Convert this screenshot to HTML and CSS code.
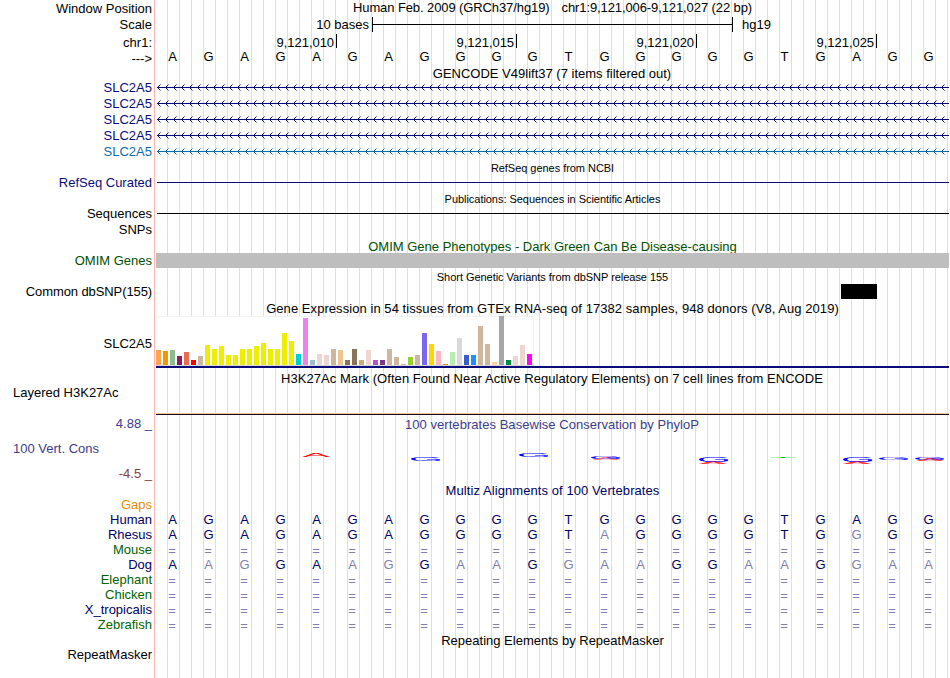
FILE: index.html
```html
<!DOCTYPE html>
<html lang="en">
<head>
  <meta charset="UTF-8">
  <meta name="viewport" content="width=device-width, initial-scale=1.0">
  <title>Human chr1:9,121,006-9,121,027</title>
  <link rel="stylesheet" href="styles.css">
</head>
<body>
  <div class="browser">
    <!-- Ruler -->
    <div class="row position">
      <div class="label">Window Position</div>
      <div class="title"><span class="assembly">Human Feb. 2009 (GRCh37/hg19)</span><span>chr1:9,121,006-9,121,027 (22 bp)</span></div>
    </div>
    <div class="row scale">
      <div class="label">Scale</div>
      <div class="scale-bar">
        <span class="bases-text">10 bases</span>
        <div class="bar"></div>
        <span>hg19</span>
      </div>
    </div>
    <div class="row chrom">
      <div class="label">chr1:</div>
      <div class="ticks">
        <span>9,121,010</span><span>9,121,015</span><span>9,121,020</span><span>9,121,025</span>
      </div>
    </div>
    <div class="row sequence">
      <div class="label">---&gt;</div>
      <div class="bases" data-seq="AGAGAGAGGGGTGGGGGTGAGG"></div>
    </div>

    <!-- Genes -->
    <div class="row gencode-title"><div class="title">GENCODE V49lift37 (7 items filtered out)</div></div>
    <div class="row gene"><div class="label">SLC2A5</div><div class="intron"></div></div>
    <div class="row gene"><div class="label">SLC2A5</div><div class="intron"></div></div>
    <div class="row gene"><div class="label">SLC2A5</div><div class="intron"></div></div>
    <div class="row gene"><div class="label">SLC2A5</div><div class="intron"></div></div>
    <div class="row gene light"><div class="label">SLC2A5</div><div class="intron"></div></div>
    <div class="row refseq-title"><div class="title small">RefSeq genes from NCBI</div></div>
    <div class="row navy"><div class="label">RefSeq Curated</div><div class="line"></div></div>
    <div class="row pubs-title"><div class="title small">Publications: Sequences in Scientific Articles</div></div>
    <div class="row"><div class="label">Sequences</div><div class="line"></div></div>
    <div class="row snps"><div class="label">SNPs</div></div>
    <div class="row omim-title"><div class="title">OMIM Gene Phenotypes - Dark Green Can Be Disease-causing</div></div>
    <div class="row omim"><div class="label">OMIM Genes</div><div class="block"></div></div>
    <div class="row pubs-title"><div class="title small">Short Genetic Variants from dbSNP release 155</div></div>
    <div class="row"><div class="label tight">Common dbSNP(155)</div><div class="variant"></div></div>

    <!-- Expression -->
    <div class="row gtex-title"><div class="title">Gene Expression in 54 tissues from GTEx RNA-seq of 17382 samples, 948 donors (V8, Aug 2019)</div></div>
    <div class="row gtex">
      <div class="label">SLC2A5</div>
      <div class="gtex-track"><div class="chart" id="chart"></div></div>
    </div>

    <!-- Regulation and conservation -->
    <div class="row h3k-title"><div class="title">H3K27Ac Mark (Often Found Near Active Regulatory Elements) on 7 cell lines from ENCODE</div></div>
    <div class="row h3k"><div class="label left">Layered H3K27Ac</div><div class="signal"></div></div>
    <div class="row phylop-title"><div class="label">4.88 _</div><div class="title">100 vertebrates Basewise Conservation by PhyloP</div></div>
    <div class="row phylop">
      <div class="label left">100 Vert. Cons</div>
      <svg id="logo" width="793" height="35" viewBox="156 430 793 35"></svg>
    </div>
    <div class="row phylop-min"><div class="label">-4.5 _</div></div>

    <!-- Alignments -->
    <div class="row multiz-title"><div class="title">Multiz Alignments of 100 Vertebrates</div></div>
    <div class="row gaps"><div class="label">Gaps</div></div>
    <div class="row species"><div class="label">Human</div><div class="bases" data-seq="AGAGAGAGGGGTGGGGGTGAGG"></div></div>
    <div class="row species"><div class="label">Rhesus</div><div class="bases" data-seq="AGAGAGAGGGGTaGGGGTGgGG"></div></div>
    <div class="row species green"><div class="label">Mouse</div><div class="bases" data-seq="======================"></div></div>
    <div class="row species"><div class="label">Dog</div><div class="bases" data-seq="AagGAagGaaGgaaGGaaGgaa"></div></div>
    <div class="row species green"><div class="label">Elephant</div><div class="bases" data-seq="======================"></div></div>
    <div class="row species green"><div class="label">Chicken</div><div class="bases" data-seq="======================"></div></div>
    <div class="row species"><div class="label">X_tropicalis</div><div class="bases" data-seq="======================"></div></div>
    <div class="row species green"><div class="label">Zebrafish</div><div class="bases" data-seq="======================"></div></div>
    <div class="row rmsk-title"><div class="title">Repeating Elements by RepeatMasker</div></div>
    <div class="row rmsk"><div class="label">RepeatMasker</div></div>
  </div>

  <script>
    // Bases: lower case marks a mismatch, "=" an unaligned base
    document.querySelectorAll('.bases').forEach(row => {
      for (const base of row.dataset.seq) {
        const cell = document.createElement('span');
        cell.textContent = base.toUpperCase();
        if (base === '=') {
          cell.className = 'unaligned';
        } else if (base !== base.toUpperCase()) {
          cell.className = 'mismatch';
        }
        row.appendChild(cell);
      }
    });

    // Introns with strand arrows every 8px
    document.querySelectorAll('.intron').forEach(row => {
      let arrows = '';
      for (let x = 1.5; x < 793; x += 8) {
        arrows += `M${x + 3} 4.5L${x} 7.5L${x + 3} 10.5`;
      }
      row.innerHTML = `<svg width="793" height="16"><path class="arrows" d="${arrows}"/><path d="M1 7.5H793"/></svg>`;
    });

    // GTEx tissues: [height, color]
    const tissues = [
      [15, '#ffa54f'], [14, '#ee9a00'], [15, '#8fbc8f'], [9, '#8b1c62'], [13, '#ee6a50'], [5, '#ff0000'],
      [9, '#cdb79e'], [20, '#eeee00'], [16, '#eeee00'], [19, '#eeee00'], [10, '#eeee00'], [10, '#eeee00'],
      [16, '#eeee00'], [16, '#eeee00'], [19, '#eeee00'], [22, '#eeee00'], [16, '#eeee00'], [16, '#eeee00'],
      [32, '#eeee00'], [24, '#eeee00'], [11, '#00cdcd'], [47, '#ee82ee'], [5, '#9ac0cd'], [11, '#eed5d2'],
      [10, '#eed5d2'], [16, '#cdb79e'], [15, '#eec591'], [5, '#8b7355'], [16, '#8b7355'], [5, '#cdaa7d'],
      [15, '#eed5d2'], [5, '#b452cd'], [5, '#7a378b'], [16, '#cdb79e'], [8, '#cdb79e'], [1, '#cdb79e'],
      [8, '#9acd32'], [10, '#cdb79e'], [32, '#7a67ee'], [21, '#ffd700'], [14, '#ffb6c1'], [1, '#cd9b1d'],
      [13, '#b4eeb4'], [27, '#d9d9d9'], [10, '#3a5fcd'], [10, '#1e90ff'], [39, '#cdb79e'], [21, '#cdb79e'],
      [3, '#ffd39b'], [49, '#a6a6a6'], [5, '#008b45'], [9, '#eed5d2'], [20, '#eed5d2'], [11, '#ff00ff']
    ];
    const chart = document.getElementById('chart');
    tissues.forEach(([height, color]) => {
      const bar = document.createElement('div');
      bar.style.height = height + 'px';
      bar.style.backgroundColor = color;
      chart.appendChild(bar);
    });

    // Conservation letters squeezed to their score: [letter, x, top, width, height, color]
    const letters = [
      ['A', 302, 453, 28, 4, '#ff0000'],
      ['G', 411, 457, 30, 4, '#0000ff'],
      ['G', 519, 453, 30, 4, '#0000ff'],
      ['A', 592, 458, 28, 2, '#ff8080'],
      ['G', 591, 457, 30, 2, '#0000ff'],
      ['A', 699, 461.6, 28, 2.2, '#ff3030'],
      ['G', 699, 457, 30, 5, '#0000ff'],
      ['T', 770, 457, 26, 1, '#00c800'],
      ['A', 843, 461.6, 28, 2.2, '#ff3030'],
      ['G', 843, 457, 30, 5, '#0000ff'],
      ['G', 879, 457, 30, 2.6, '#0000ff'],
      ['A', 916, 459, 28, 2, '#ff4040'],
      ['G', 915, 457, 30, 2.6, '#0000ff']
    ];
    const ink = { A: [0, 66.7], G: [5, 68], T: [2, 57] };
    document.getElementById('logo').innerHTML = letters.map(([letter, x, top, width, height, color]) => {
      const sx = width / ink[letter][1];
      const sy = height / 70;
      return `<text fill="${color}" transform="translate(${x - ink[letter][0] * sx} ${top + height}) scale(${sx} ${sy})">${letter}</text>`;
    }).join('');
  </script>
</body>
</html>
```
FILE: styles.css
```css
body {
  margin: 0;
  background-color: white;
  color: #000;
  font-family: "Liberation Sans", Arial, sans-serif;
  font-size: 13px;
  line-height: 15px;
}

.browser {
  width: 949px;
  height: 678px;
  overflow: hidden;
  background:
    linear-gradient(#ffb4b4, #ffb4b4) 154px 0 / 1px 100% no-repeat,
    repeating-linear-gradient(90deg, #dcdcf8 0 1px, transparent 1px 12px) 167px 0 / 782px 100% no-repeat;
}

.row {
  display: grid;
  grid-template-columns: 152px 793px;
  column-gap: 4px;
  height: 15px;
  white-space: nowrap;
}

.label {
  text-align: right;
}

.label.left {
  text-align: left;
  padding-left: 13px;
}

.label.tight {
  letter-spacing: -0.1px;
}

.title {
  grid-column: 2;
  text-align: center;
}

.title.small {
  padding-top: 1px;
  font-size: 11px;
  letter-spacing: -0.04px;
}

/* Ruler */
.position {
  height: 17px;
}

.position .label {
  padding-top: 1px;
}

.position .title {
  letter-spacing: -0.1px;
}

.assembly {
  margin-right: 12px;
}

.scale {
  height: 16px;
}

.scale-bar {
  display: flex;
}

.bases-text {
  width: 213px;
  margin-right: 3px;
  text-align: right;
}

.bar {
  width: 359px;
  height: 15px;
  margin-right: 9px;
  border-left: 1px solid #000;
  border-right: 1px solid #000;
  background: linear-gradient(#000, #000) 0 7px / 100% 1px no-repeat;
}

.chrom {
  height: 16px;
}

.chrom .label {
  padding-top: 2px;
}

.ticks {
  display: flex;
  padding-top: 1px;
  padding-left: 1px;
}

.ticks span {
  box-sizing: border-box;
  width: 180px;
  height: 14px;
  padding-top: 1px;
  padding-right: 2px;
  border-right: 1px solid #000;
  text-align: right;
  letter-spacing: -0.05px;
}

.sequence {
  height: 17px;
}

.sequence .label {
  padding-top: 2px;
}

.bases {
  display: grid;
  grid-template-columns: repeat(22, 36px);
  margin-left: -1.5px;
  text-align: center;
}

/* Gene tracks */
.gencode-title {
  height: 14px;
}

.gencode-title .title {
  padding-right: 1px;
}

.gene {
  height: 16px;
  color: #0c0c78;
}

.gene.light {
  color: #0c6cb0;
}

.intron svg {
  display: block;
  fill: none;
  stroke: currentColor;
}

.navy {
  color: #0c0c78;
}

.line {
  height: 1px;
  margin-top: 7px;
  margin-left: 1px;
  background-color: currentColor;
}

.pubs-title {
  height: 16px;
}

.pubs-title .title {
  padding-top: 2px;
}

.snps {
  height: 16px;
}

.snps .label {
  padding-top: 1px;
}

.omim-title {
  height: 16px;
  color: #005000;
}

.omim-title .title {
  padding-top: 2px;
}

.omim .label {
  color: #005000;
}

.block {
  position: relative;
  background-color: #bebebe;
}

.variant {
  width: 36px;
  margin-left: 685px;
  background-color: #000;
}

/* Expression */
.gtex-title {
  height: 17px;
}

.gtex-title .title {
  padding-top: 2px;
  letter-spacing: 0.06px;
}

.gtex {
  height: 52px;
}

.gtex .label {
  padding-top: 20px;
}

.gtex-track {
  position: relative;
  border-bottom: 2px solid #0c0c78;
}

.chart {
  display: flex;
  align-items: flex-end;
  gap: 2px;
  box-sizing: border-box;
  width: 378px;
  height: 50px;
  border-bottom: 1px solid #d8d8d8;
  background-color: white;
  box-shadow: inset 0 1px #f2f2f2, inset -1px 0 #f2f2f2;
}

.chart div {
  width: 5px;
}

/* Regulation and conservation */
.h3k-title .title {
  padding-top: 3px;
  padding-right: 1px;
  letter-spacing: 0.05px;
}

.h3k {
  height: 32px;
}

.h3k .label {
  padding-top: 2px;
}

.signal {
  align-self: end;
  height: 1px;
  border-top: 1px solid #f5c880;
  background-color: #1c0428;
}

.phylop-title,
.phylop {
  color: #3c3c8c;
}

.phylop-title .label {
  padding-top: 1px;
}

.phylop-title .title {
  padding-top: 2px;
  padding-right: 1px;
  letter-spacing: 0.04px;
}

.phylop {
  height: 35px;
}

.phylop .label {
  padding-top: 11px;
}

#logo {
  font-size: 100px;
}

.phylop-min {
  color: #8c3c3c;
}

.phylop-min .label {
  padding-top: 1px;
}

/* Alignments */
.multiz-title {
  height: 17px;
  color: #000064;
}

.multiz-title .title {
  padding-top: 3px;
  letter-spacing: 0.08px;
}

.gaps {
  color: #e68c0a;
}

.species {
  color: #000064;
}

.species.green .label {
  color: #006400;
}

.mismatch,
.unaligned {
  color: #8080b2;
}

.unaligned {
  padding-top: 1px;
  padding-right: 1px;
}

.rmsk-title .title {
  padding-top: 1px;
}

.rmsk {
  height: 31px;
}
```
